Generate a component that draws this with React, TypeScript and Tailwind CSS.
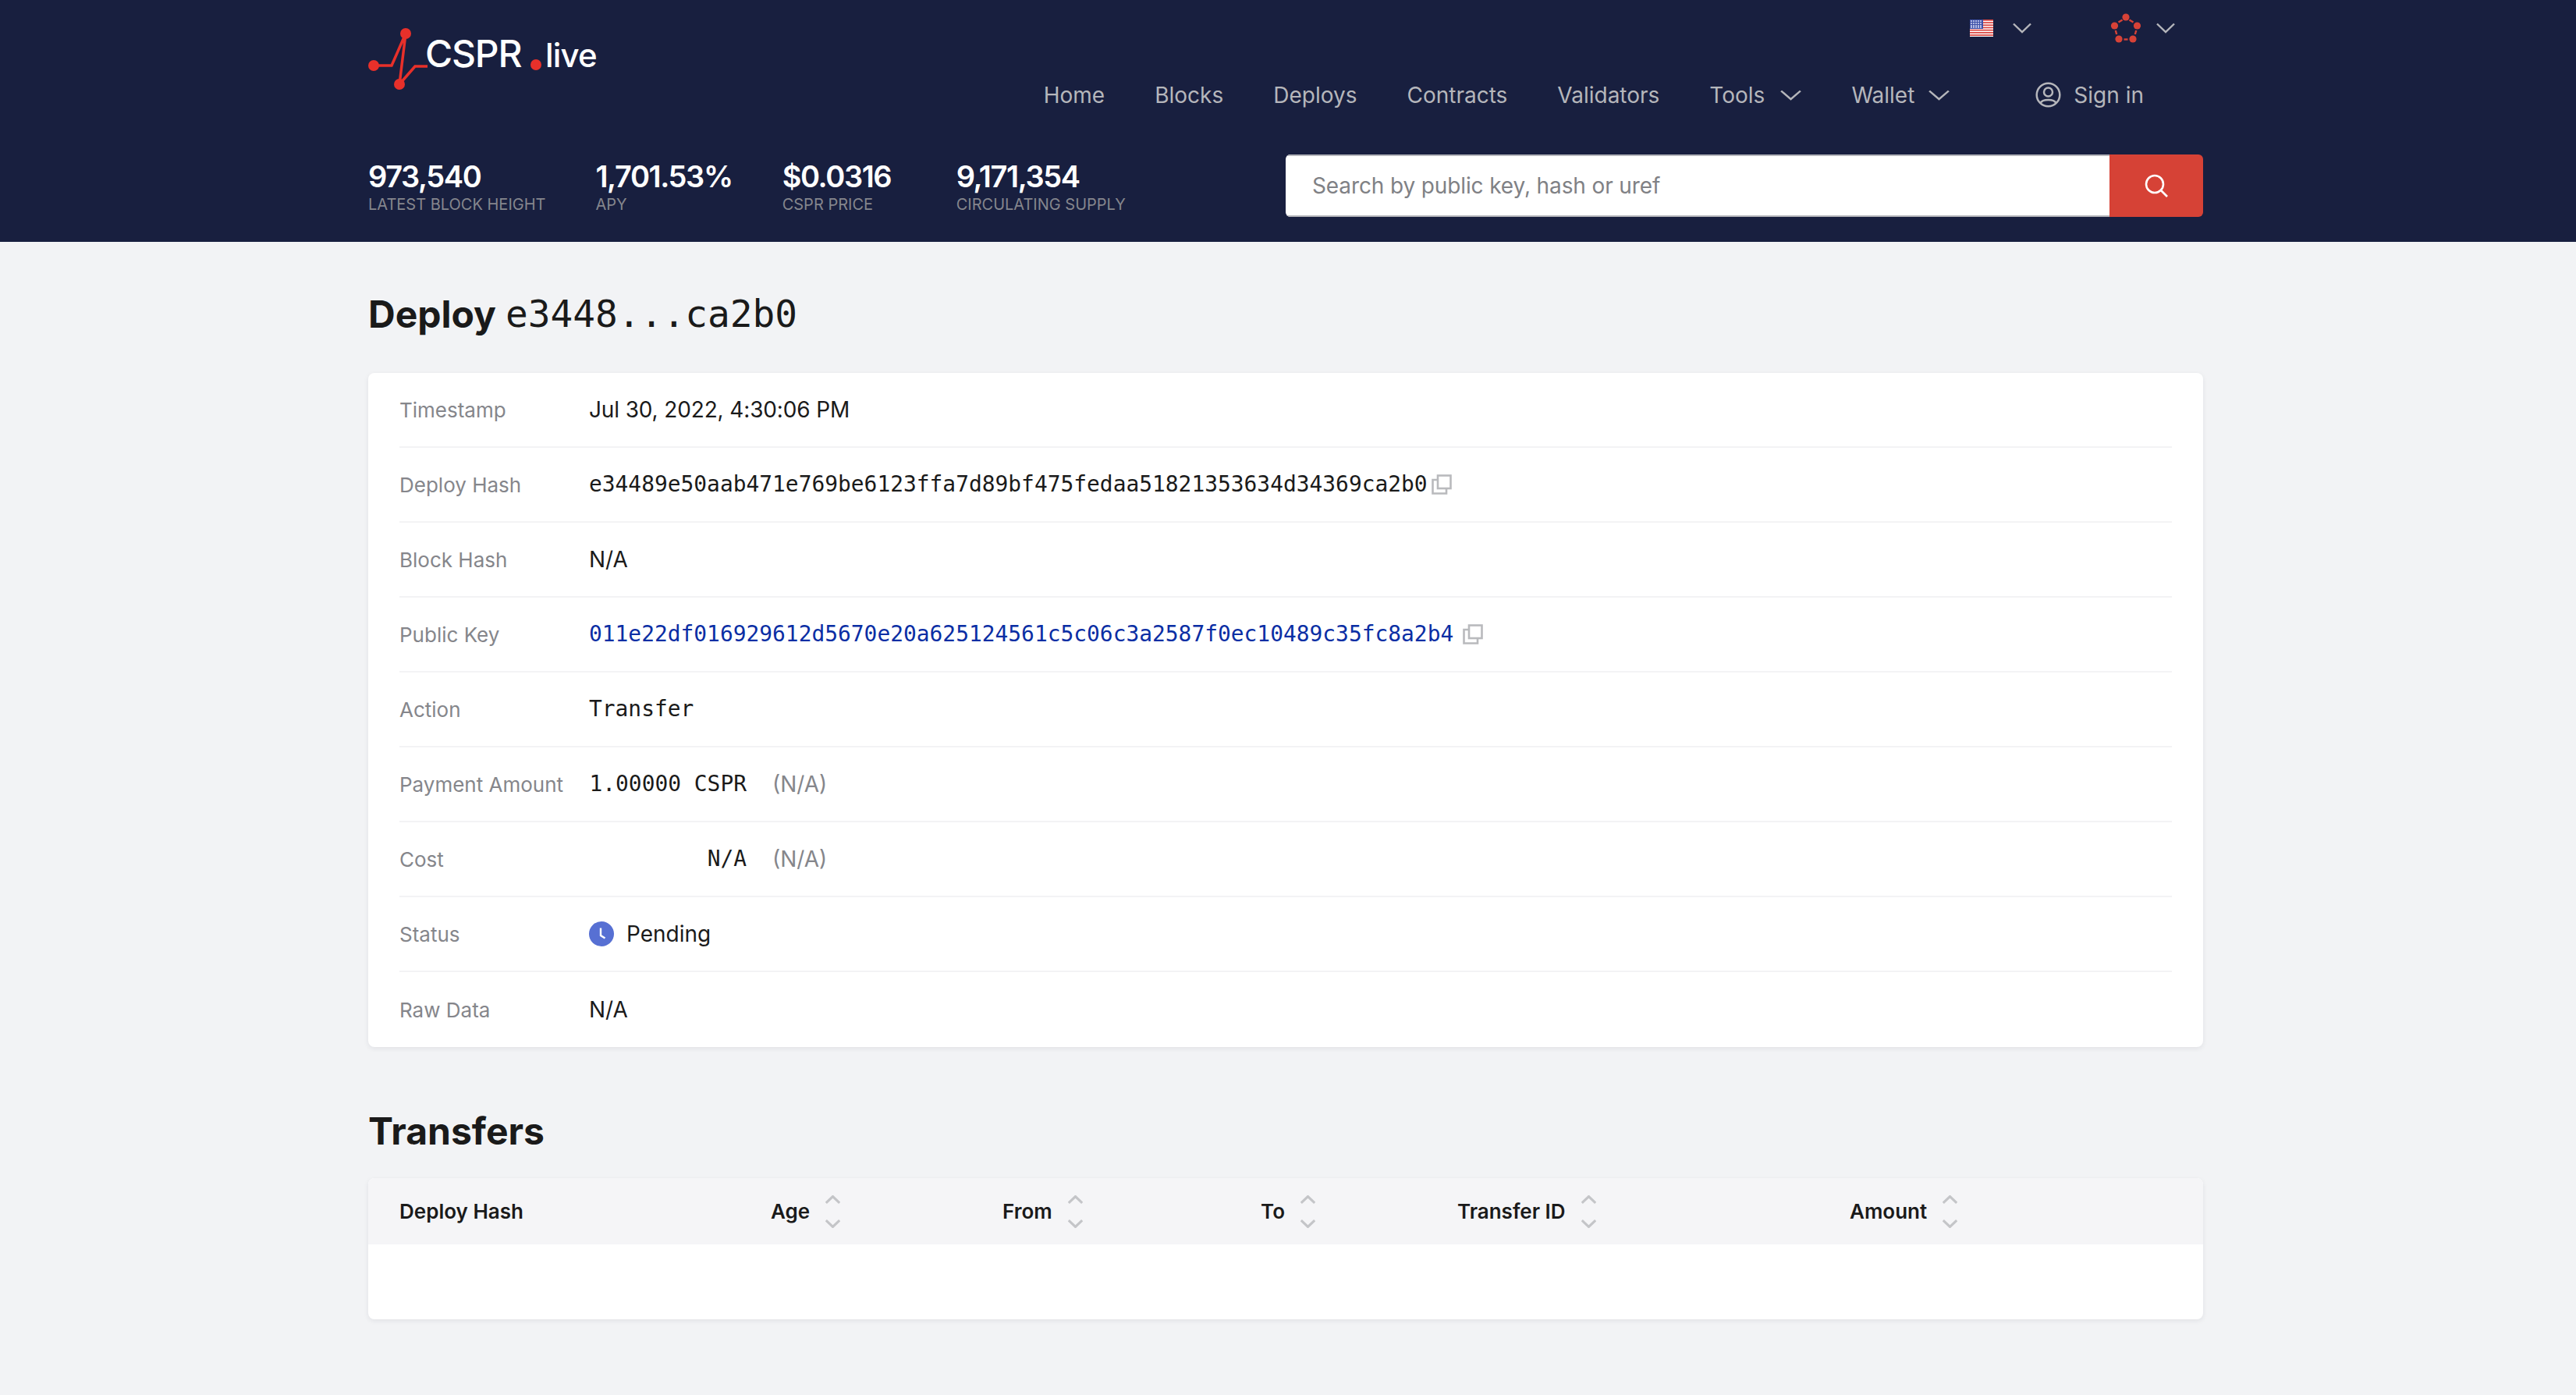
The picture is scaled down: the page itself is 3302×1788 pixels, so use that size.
import React from "react";

const mono = "font-['DejaVu_Sans_Mono',monospace]";

function Chevron({ className = "", sw = 2.4 }: { className?: string; sw?: number }) {
  return (
    <svg viewBox="0 0 24 14" className={className} fill="none" stroke="currentColor" strokeWidth={sw} preserveAspectRatio="none">
      <path d="M1 1.5 L12 12 L23 1.5" />
    </svg>
  );
}

function Logo() {
  return (
    <svg width="300" height="100" viewBox="0 0 300 100" className="block">
      <g stroke="#e8302a" strokeWidth="3.5" fill="none">
        <path d="M7 52 H30 L48 11 L40 76 L60 53 H76" />
      </g>
      <g fill="#e8302a">
        <circle cx="7" cy="52" r="7" />
        <circle cx="48" cy="11" r="7" />
        <circle cx="40" cy="76" r="7" />
        <circle cx="215" cy="51" r="7" />
      </g>
      <text x="73" y="54" fill="#fff" fontSize="48" letterSpacing="-1.2" fontFamily="Inter, sans-serif" fontWeight="500">CSPR</text>
      <text x="227" y="54" fill="#fff" fontSize="42" letterSpacing="-0.8" fontFamily="Inter, sans-serif" fontWeight="500">live</text>
    </svg>
  );
}

function Flag() {
  const stripes = [0, 1, 2, 3, 4, 5, 6];
  return (
    <svg width="30" height="22" viewBox="0 0 30 22" className="block">
      <rect width="30" height="22" fill="#fff" />
      {stripes.map((i) => (
        <rect key={i} y={i * 3.2} width="30" height="1.7" fill="#d9443f" />
      ))}
      <rect width="17" height="12" fill="#3f51a8" />
      {[2, 5, 8, 11, 14].map((x) =>
        [2, 5, 8, 10].map((y) => <circle key={`${x}-${y}`} cx={x} cy={y} r="1" fill="#d5dbf5" />)
      )}
    </svg>
  );
}

function Network() {
  const pts: [number, number][] = [
    [20, 5],
    [34.5, 16],
    [29, 33],
    [11, 33],
    [5.5, 16],
  ];
  const dash: [number, number, number, number][] = [
    [24.5, 8.5, 29.5, 11.5],
    [33.3, 22, 31.8, 27],
    [17.5, 33.5, 22.5, 33.5],
    [6.8, 22, 8.2, 27],
    [10.5, 11.5, 15.5, 8.5],
  ];
  return (
    <svg width="40" height="38" viewBox="0 0 40 38" className="block">
      <g stroke="#d74237" strokeWidth="2.4">
        {dash.map((d, i) => (
          <line key={i} x1={d[0]} y1={d[1]} x2={d[2]} y2={d[3]} />
        ))}
      </g>
      <g fill="#d74237">
        {pts.map((p, i) => (
          <circle key={i} cx={p[0]} cy={p[1]} r="4.6" />
        ))}
      </g>
    </svg>
  );
}

function UserIcon() {
  return (
    <svg width="33" height="33" viewBox="0 0 33 33" fill="none" stroke="currentColor" strokeWidth="2.5" className="block">
      <circle cx="16.5" cy="16.5" r="14.8" />
      <circle cx="16.5" cy="13" r="5.5" />
      <path d="M6.5 27 C9 21.5 24 21.5 26.5 27" />
    </svg>
  );
}

function Copy() {
  return (
    <svg width="26" height="26" viewBox="0 0 26 26" fill="none" stroke="#b9babd" strokeWidth="2.6" className="block">
      <rect x="8" y="1.5" width="16.5" height="16.5" />
      <path d="M8 7 H1.5 V24.5 H19 V18" />
    </svg>
  );
}

function Clock() {
  return (
    <svg width="32" height="32" viewBox="0 0 32 32" className="block">
      <circle cx="16" cy="16" r="16" fill="#5770d3" />
      <path d="M15 8.5 V18 L20.5 21.5" fill="none" stroke="#fff" strokeWidth="2.4" />
    </svg>
  );
}

function Sort() {
  return (
    <span className="ml-[20px] flex flex-col gap-[20px] text-[#c4c5c8]">
      <Chevron sw={4} className="h-[11px] w-[19px] rotate-180" />
      <Chevron sw={4} className="h-[11px] w-[19px]" />
    </span>
  );
}

function Stat({ value, label, className = "" }: { value: string; label: string; className?: string }) {
  return (
    <div className={`flex flex-col ${className}`}>
      <span className="text-[38px] leading-[48px] font-semibold text-white tracking-[-1.4px]">{value}</span>
      <span className="text-[20px] leading-[24px] text-[#85868d]">{label}</span>
    </div>
  );
}

function Row({ label, children, last }: { label: string; children: React.ReactNode; last?: boolean }) {
  return (
    <div className={`flex h-[96px] items-center ${last ? "" : "border-b-2 border-[#f3f3f5]"}`}>
      <span className="w-[243px] shrink-0 text-[26px] text-[#85868b]">{label}</span>
      {children}
    </div>
  );
}

const navItems = ["Home", "Blocks", "Deploys", "Contracts", "Validators"];

const columns: [string, string][] = [
  ["Deploy Hash", "w-[476px]"],
  ["Age", "w-[297px]"],
  ["From", "w-[331px]"],
  ["To", "w-[252px]"],
  ["Transfer ID", "w-[503px]"],
  ["Amount", ""],
];

export default function App() {
  return (
    <div className="min-h-screen bg-[#f2f3f5] font-['Inter',sans-serif] text-[28px] text-[#1a1a1a]">
      <header className="h-[310px] bg-[#181f3f]">
        <div className="ml-[472px] w-[2352px]">
          <div className="flex h-[172px] justify-between">
            <div className="pt-[32px]">
              <Logo />
            </div>
            <div className="flex flex-col items-end text-[#b5b6bb]">
              <div className="flex h-[72px] items-center pr-[36px]">
                <Flag />
                <Chevron className="ml-[25px] h-[14px] w-[24px]" />
                <span className="ml-[101px]">
                  <Network />
                </span>
                <Chevron className="ml-[19px] h-[14px] w-[24px]" />
              </div>
              <nav className="flex h-[102px] items-center gap-[64px] pr-[76px]">
                {navItems.map((n) => (
                  <span key={n}>{n}</span>
                ))}
                <span className="flex items-center gap-[20px]">
                  Tools <Chevron className="h-[14px] w-[27px]" />
                </span>
                <span className="flex items-center gap-[18px]">
                  Wallet <Chevron className="h-[14px] w-[27px]" />
                </span>
                <span className="ml-[46px] flex items-center gap-[16px]">
                  <UserIcon />
                  Sign in
                </span>
              </nav>
            </div>
          </div>
          <div className="mt-[26px] flex items-start justify-between">
            <div className="flex gap-[64px] pt-[4px]">
              <Stat value="973,540" label="LATEST BLOCK HEIGHT" />
              <Stat value="1,701.53%" label="APY" />
              <Stat value="$0.0316" label="CSPR PRICE" className="w-[159px]" />
              <Stat value="9,171,354" label="CIRCULATING SUPPLY" />
            </div>
            <div className="flex h-[80px] w-[1176px] overflow-hidden rounded-[6px]">
              <div className="flex flex-1 items-center border-y-2 border-[#b5b6bb] bg-white pl-[34px] tracking-[-0.12px] text-[#808185]">
                Search by public key, hash or uref
              </div>
              <div className="flex w-[120px] items-center justify-center bg-[#d64236]">
                <svg width="32" height="32" viewBox="0 0 32 32" fill="none" stroke="#fff" strokeWidth="2.6">
                  <circle cx="14" cy="14" r="11" />
                  <path d="M22 22 L30 30" />
                </svg>
              </div>
            </div>
          </div>
        </div>
      </header>

      <main className="ml-[472px] w-[2352px]">
        <h1 className="flex h-[168px] items-center pt-[18px] text-[48px] font-bold">
          Deploy
          <span className={`${mono} ml-[12px] text-[47.8px] font-normal`}>e3448...ca2b0</span>
        </h1>
        <section className="rounded-[8px] bg-white px-[40px] shadow-[0_2px_6px_rgba(20,24,50,0.08)]">
          <Row label="Timestamp">
            <span className="tracking-[-0.14px]">Jul 30, 2022, 4:30:06 PM</span>
          </Row>
          <Row label="Deploy Hash">
            <span className={`${mono} text-[27.9px]`}>e34489e50aab471e769be6123ffa7d89bf475fedaa51821353634d34369ca2b0</span>
            <span className="ml-[5px]">
              <Copy />
            </span>
          </Row>
          <Row label="Block Hash">N/A</Row>
          <Row label="Public Key">
            <span className={`${mono} text-[27.9px] text-[#0a2ea4]`}>011e22df016929612d5670e20a625124561c5c06c3a2587f0ec10489c35fc8a2b4</span>
            <span className="ml-[12px]">
              <Copy />
            </span>
          </Row>
          <Row label="Action">
            <span className={`${mono} text-[27.9px]`}>Transfer</span>
          </Row>
          <Row label="Payment Amount">
            <span className={`${mono} w-[202px] text-right text-[27.9px]`}>1.00000 CSPR</span>
            <span className="ml-[33px] text-[#85868b]">(N/A)</span>
          </Row>
          <Row label="Cost">
            <span className={`${mono} w-[202px] text-right text-[27.9px]`}>N/A</span>
            <span className="ml-[33px] text-[#85868b]">(N/A)</span>
          </Row>
          <Row label="Status">
            <Clock />
            <span className="ml-[16px]">Pending</span>
          </Row>
          <Row label="Raw Data" last>
            N/A
          </Row>
        </section>

        <h2 className="flex h-[168px] items-center pt-[48px] text-[48px] font-bold">Transfers</h2>
        <section className="overflow-hidden rounded-[8px] bg-white shadow-[0_2px_6px_rgba(20,24,50,0.08)]">
          <div className="flex h-[85px] items-center bg-[#f5f5f7] pl-[40px] text-[26px] font-semibold">
            {columns.map(([c, w], i) => (
              <div key={c} className={`flex items-center ${w}`}>
                <span>{c}</span>
                {i > 0 && <Sort />}
              </div>
            ))}
          </div>
          <div className="h-[96px]" />
        </section>
      </main>
    </div>
  );
}
